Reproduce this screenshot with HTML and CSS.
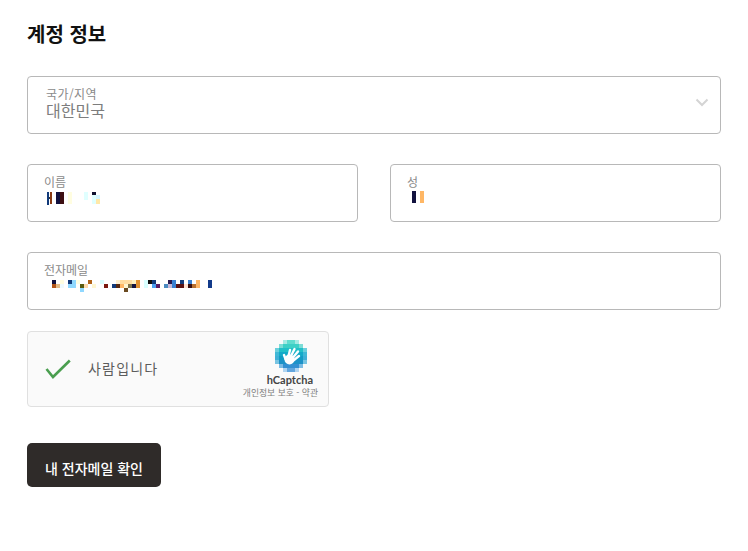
FILE: index.html
```html
<!DOCTYPE html>
<html lang="ko">
<head>
<meta charset="utf-8">
<title>계정 정보</title>
<link rel="stylesheet" href="styles.css">
</head>
<body>
<main class="form">
  <h2 class="title">계정 정보</h2>
  <div class="field select">
    <span class="label">국가/지역</span>
    <span class="value">대한민국</span>
    <svg class="chev" width="14" height="9" viewBox="0 0 14 9"><path d="M1.500 1.500 7 7l5.500-5.500" fill="none" stroke="#d4d4d4" stroke-width="2"/></svg>
  </div>
  <div class="row">
    <div class="field name">
      <span class="label">이름</span>
      <svg class="mask" width="60" height="16" viewBox="0 0 60 16" shape-rendering="crispEdges">
        <rect x="3" y="2" width="2" height="13" fill="#123a7a"/><rect x="5" y="7" width="1" height="2" fill="#333"/><rect x="6" y="2" width="2" height="12" fill="#8a3a12"/>
        <rect x="12" y="2" width="4" height="12" fill="#12123f"/><rect x="16" y="2" width="4" height="12" fill="#3d0f12"/>
        <rect x="24" y="2" width="4" height="12" fill="#fffde0"/><rect x="40" y="2" width="4" height="8" fill="#e0ffff"/>
        <rect x="48" y="2" width="4" height="3" fill="#10102e"/><rect x="48" y="5" width="4" height="9" fill="#e0ffff"/><rect x="52" y="5" width="4" height="4" fill="#d5f5ff"/><rect x="52" y="9" width="4" height="5" fill="#ffe8a8"/>
      </svg>
    </div>
    <div class="field name">
      <span class="label">성</span>
      <svg class="mask" width="24" height="16" viewBox="0 0 24 16" shape-rendering="crispEdges">
        <rect x="5" y="1" width="4" height="12" fill="#12123f"/><rect x="13" y="1" width="4" height="12" fill="#ffb765"/>
      </svg>
    </div>
  </div>
  <div class="field mail">
    <span class="label">전자메일</span>
    <svg class="mask" width="176" height="16" viewBox="0 0 176 16" shape-rendering="crispEdges">
      <rect x="8" y="0" width="4" height="4" fill="#12123f"/><rect x="8" y="4" width="4" height="4" fill="#b2541a"/><rect x="12" y="4" width="4" height="4" fill="#e4bb86"/><rect x="16" y="0" width="4" height="4" fill="#fffde0"/><rect x="16" y="4" width="4" height="4" fill="#eefaff"/>
      <rect x="24" y="0" width="4" height="4" fill="#123a7a"/><rect x="24" y="4" width="8" height="4" fill="#90d8ff"/><rect x="28" y="0" width="4" height="4" fill="#90d8ff"/>
      <rect x="32" y="0" width="4" height="4" fill="#fffde0"/><rect x="36" y="8" width="4" height="4" fill="#90d8ff"/><rect x="36" y="4" width="4" height="4" fill="#5a5a10"/><rect x="40" y="4" width="4" height="4" fill="#ffd8a8"/><rect x="44" y="0" width="4" height="4" fill="#b2641a"/><rect x="48" y="4" width="4" height="4" fill="#fff6d0"/>
      <rect x="56" y="0" width="4" height="4" fill="#d8ffff"/><rect x="60" y="4" width="4" height="4" fill="#7a1a10"/>
      <rect x="68" y="4" width="4" height="4" fill="#123a7a"/><rect x="72" y="4" width="4" height="4" fill="#5a2a10"/><rect x="72" y="0" width="4" height="4" fill="#fff0d0"/><rect x="76" y="0" width="12" height="4" fill="#ffdca0"/><rect x="76" y="4" width="4" height="4" fill="#ffb765"/><rect x="80" y="4" width="4" height="4" fill="#fff6d0"/><rect x="84" y="4" width="4" height="4" fill="#80744a"/><rect x="80" y="8" width="4" height="4" fill="#6a4a20"/>
      <rect x="88" y="4" width="4" height="4" fill="#12123f"/><rect x="88" y="0" width="4" height="4" fill="#fff0c0"/><rect x="92" y="0" width="4" height="8" fill="#e09030"/><rect x="100" y="0" width="4" height="8" fill="#d8ffff"/>
      <rect x="104" y="0" width="4" height="4" fill="#101010"/><rect x="108" y="0" width="4" height="4" fill="#123a7a"/><rect x="108" y="4" width="4" height="4" fill="#4aa0f0"/><rect x="112" y="4" width="4" height="4" fill="#5a1a60"/>
      <rect x="120" y="4" width="4" height="4" fill="#4a8ac0"/><rect x="124" y="0" width="4" height="4" fill="#2a1a50"/><rect x="124" y="4" width="4" height="4" fill="#c8b8d8"/><rect x="128" y="0" width="4" height="8" fill="#3a80d0"/><rect x="132" y="4" width="8" height="4" fill="#5a1010"/><rect x="136" y="0" width="4" height="4" fill="#123a7a"/><rect x="140" y="4" width="4" height="4" fill="#ffe0d0"/><rect x="144" y="0" width="4" height="4" fill="#3a80d0"/><rect x="144" y="4" width="4" height="4" fill="#3a1010"/><rect x="148" y="4" width="4" height="4" fill="#b87030"/><rect x="152" y="0" width="4" height="8" fill="#ffb765"/>
      <rect x="164" y="0" width="4" height="8" fill="#123a8a"/>
    </svg>
  </div>
  <div class="captcha">
    <svg class="check" width="28" height="22" viewBox="0 0 28 22"><path d="M1.500 11 8 19 24.800 2.500" fill="none" stroke="#4a9e4f" stroke-width="2.600"/></svg>
    <span class="captcha-text">사람입니다</span>
    <div class="brand">
      <svg class="logo" width="32" height="32" viewBox="0 0 32 32">
        <g shape-rendering="crispEdges">
          <rect x="8" y="0" width="4" height="4" fill="#a8eae4"/><rect x="12" y="0" width="8" height="4" fill="#62dccf"/><rect x="20" y="0" width="4" height="4" fill="#a8eae4"/>
          <rect x="4" y="4" width="4" height="4" fill="#7cdcd6"/><rect x="8" y="4" width="16" height="4" fill="#3ed0c6"/><rect x="24" y="4" width="4" height="4" fill="#7cdcd6"/>
          <rect x="0" y="8" width="4" height="4" fill="#6ccfdc"/><rect x="4" y="8" width="24" height="4" fill="#22c0c8"/><rect x="28" y="8" width="4" height="4" fill="#6ccfdc"/>
          <rect x="0" y="12" width="4" height="4" fill="#40b8d6"/><rect x="4" y="12" width="24" height="4" fill="#14aac8"/><rect x="28" y="12" width="4" height="4" fill="#40b8d6"/>
          <rect x="0" y="16" width="4" height="4" fill="#40b0d6"/><rect x="4" y="16" width="24" height="4" fill="#129cc4"/><rect x="28" y="16" width="4" height="4" fill="#40b0d6"/>
          <rect x="0" y="20" width="4" height="4" fill="#78c4e2"/><rect x="4" y="20" width="24" height="4" fill="#1c92c8"/><rect x="28" y="20" width="4" height="4" fill="#78c4e2"/>
          <rect x="4" y="24" width="4" height="4" fill="#7cbce4"/><rect x="8" y="24" width="16" height="4" fill="#3490d2"/><rect x="24" y="24" width="4" height="4" fill="#7cbce4"/>
          <rect x="8" y="28" width="4" height="4" fill="#b0d4f0"/><rect x="12" y="28" width="8" height="4" fill="#62a6de"/><rect x="20" y="28" width="4" height="4" fill="#b0d4f0"/>
        </g>
        <path d="M13.500 16 15 10M16 16 19.500 9M18 17.500 23 11.500M19 20 24 16M10.500 19 9 15" fill="none" stroke="#fff" stroke-linecap="round" stroke-width="2.400"/>
        <circle cx="14.500" cy="19.500" r="5" fill="#fff"/>
      </svg>
      <span class="brand-name">hCaptcha</span>
      <span class="brand-links">개인정보 보호 - 약관</span>
    </div>
  </div>
  <button class="submit" type="button">내 전자메일 확인</button>
</main>
</body>
</html>
```

FILE: styles.css
```css
* { box-sizing: border-box; }
html, body { margin: 0; padding: 0; background: #fff; }
body {
  width: 748px;
  height: 551px;
  overflow: hidden;
  font-family: "Noto Sans CJK KR", "Noto Sans", sans-serif;
}
.form {
  display: flex;
  flex-direction: column;
  align-items: flex-start;
  padding: 21px 0 0 27px;
  width: 721px;
}
.title {
  margin: 0 0 29px;
  font-size: 20px;
  line-height: 26px;
  font-weight: 700;
  color: #111;
}
.field {
  position: relative;
  display: flex;
  flex-direction: column;
  align-items: flex-start;
  width: 100%;
  height: 58px;
  margin-bottom: 30px;
  padding: 9px 16px 0;
  border: 1px solid #b8b8b8;
  border-radius: 4px;
  background: #fff;
}
.select { padding: 9px 18px 0; }
.label {
  font-size: 12px;
  line-height: 15px;
  color: #8a8a8a;
}
.select .label { letter-spacing: .4px; }
.value {
  font-size: 16px;
  line-height: 18px;
  color: #7d7d7d;
}
.chev { position: absolute; right: 11px; top: 21px; }
.mask { display: block; margin-top: 1px; }
.mail .mask { margin-top: 3px; }
.row {
  display: flex;
  gap: 32px;
  width: 100%;
}
.name { flex: 1 1 0; min-width: 0; }
.row .name:first-child { flex: 0 0 331px; }
.mail { margin-bottom: 21px; }
.captcha {
  display: flex;
  align-items: center;
  width: 302px;
  height: 76px;
  padding: 0 10px 0 17px;
  margin-bottom: 36px;
  border: 1px solid #e0e0e0;
  border-radius: 4px;
  background: #fafafa;
}
.check { flex: none; }
.captcha-text {
  margin: -2px 0 0 15px;
  font-size: 14px;
  letter-spacing: 1.200px;
  color: #5c5c5c;
}
.brand {
  display: flex;
  flex-direction: column;
  align-items: flex-end;
  align-self: flex-start;
  margin-left: auto;
  padding-top: 8px;
}
.logo { display: block; margin-right: 11px; }
.brand-name {
  font-family: "Lato", "Liberation Sans", sans-serif;
  font-size: 11px;
  line-height: 14px;
  margin: 1px 5px 0 0;
  font-weight: 700;
  color: #444;
}
.brand-links {
  font-size: 8.800px;
  line-height: 11px;
  color: #808080;
}
.submit {
  width: 134px;
  height: 44px;
  padding: 5px 0 0;
  border: 0;
  border-radius: 5px;
  background: #2f2b29;
  color: #fff;
  font-family: inherit;
  font-size: 14px;
  font-weight: 500;
}
```
